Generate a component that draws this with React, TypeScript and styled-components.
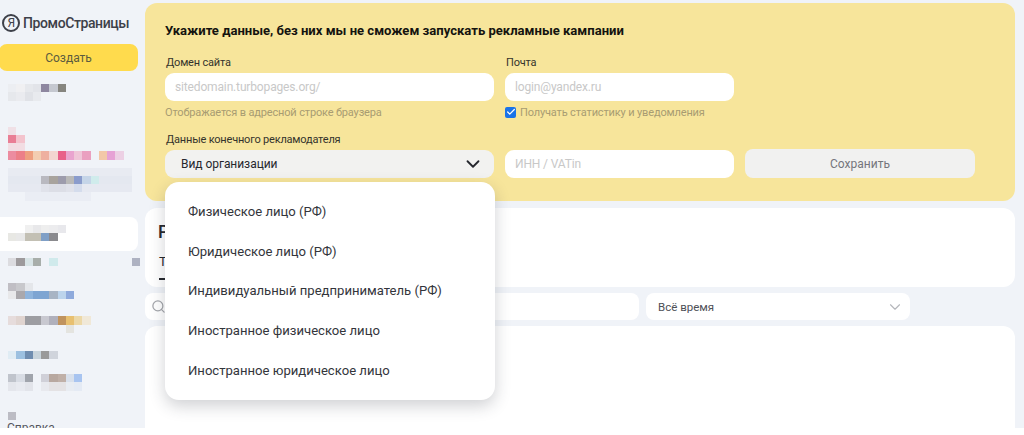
import * as React from 'react';
import styled, { createGlobalStyle } from 'styled-components';
import { Check, ChevronDown, Search } from 'lucide-react';

const GlobalStyle = createGlobalStyle`
  html, body {
    margin: 0;
    background: #fff;
    font-family: Roboto, "Liberation Sans", sans-serif;
    color: #26282d;
  }
`;

const Page = styled.div`
  display: flex;
  height: 428px;
  overflow: hidden;
  background: #f0f3f8;
`;

const Sidebar = styled.aside`
  flex: 0 0 145px;
  display: flex;
  flex-direction: column;
  padding-top: 14px;
  box-sizing: border-box;

  > * {
    flex: none;
  }
`;

const Logo = styled.div`
  display: flex;
  align-items: center;
  gap: 3px;
  height: 18px;
  padding-left: 2px;
  font-size: 14px;
  font-weight: 500;
  letter-spacing: -0.4px;
  color: #3d4049;
  white-space: nowrap;
`;

const LogoMark = styled.span`
  width: 14px;
  height: 14px;
  border: 2px solid #3d4049;
  border-radius: 50%;
  display: flex;
  align-items: center;
  justify-content: center;
  font-size: 12px;
  font-weight: 400;
`;

const CreateButton = styled.div`
  width: 139px;
  height: 27px;
  margin: 12px 0 0 -1px;
  border-radius: 8px;
  background: #ffdb4d;
  display: flex;
  align-items: center;
  justify-content: center;
  font-size: 12px;
  color: #5c5b3f;
`;

const Mosaic = styled.div<{ $gap: number }>`
  display: flex;
  flex-direction: column;
  margin: ${(p) => p.$gap}px 0 0 8px;
  filter: blur(0.5px);
`;

const MosaicRow = styled.div`
  display: flex;
  height: 8.25px;
`;

const Cell = styled.i<{ $color: string }>`
  display: block;
  width: 8.25px;
  background: ${(p) => p.$color};
`;

const ActiveItem = styled.div`
  width: 138px;
  height: 34px;
  margin-top: 16px;
  padding-top: 8px;
  box-sizing: border-box;
  background: #fff;
  border-radius: 0 8px 8px 0;
`;

const HelpLink = styled.div`
  margin: 1px 0 0 7px;
  font-size: 12px;
  color: #54565d;
`;

const Main = styled.main`
  flex: 0 0 870px;
  display: flex;
  flex-direction: column;
  gap: 6px;
  padding-top: 3px;
  position: relative;

  > section,
  > div {
    flex: none;
  }
`;

const Notice = styled.section`
  height: 198px;
  box-sizing: border-box;
  padding: 20px 40px 0 20px;
  border-radius: 12px;
  background: #f7e59b;
  margin-bottom: 1px;
`;

const NoticeTitle = styled.h2`
  margin: 0;
  font-size: 13.07px;
  line-height: 16px;
  font-weight: 700;
  color: #14130f;
`;

const FormGrid = styled.div`
  display: grid;
  grid-template-columns: 329px 229px 230px;
  column-gap: 11px;
  margin-top: 17px;
`;

const FieldLabel = styled.label`
  display: block;
  height: 14px;
  margin: 0 0 3px 1px;
  font-size: 11px;
  line-height: 14px;
  letter-spacing: -0.2px;
  color: #34332c;
`;

const Input = styled.div`
  height: 28px;
  border-radius: 9px;
  background: #fff;
  padding-left: 10px;
  display: flex;
  align-items: center;
  font-size: 12px;
  letter-spacing: -0.15px;
  color: #c8c8c8;
`;

const Hint = styled.div`
  display: flex;
  align-items: center;
  gap: 4px;
  height: 22px;
  font-size: 11px;
  letter-spacing: -0.15px;
  color: #a89c72;
`;

const CheckMark = styled.span`
  width: 11px;
  height: 11px;
  border-radius: 2px;
  background: #1a73e8;
  display: flex;
  align-items: center;
  justify-content: center;
  color: #fff;
`;

const SecondRow = styled(FormGrid)`
  margin-top: 10px;
  align-items: end;
`;

const OrgSelect = styled.div`
  height: 28px;
  border-radius: 9px;
  background: #f2f2f0;
  padding: 0 10px 0 16px;
  display: flex;
  align-items: center;
  justify-content: space-between;
  font-size: 12px;
  letter-spacing: -0.05px;
  color: #26282d;
`;

const SaveButton = styled.div`
  height: 29px;
  border-radius: 8px;
  background: #f1f1f0;
  display: flex;
  align-items: center;
  justify-content: center;
  font-size: 12px;
  color: #75767c;
`;

const Card = styled.section<{ $height: number }>`
  height: ${(p) => p.$height}px;
  box-sizing: border-box;
  border-radius: 12px;
  background: #fff;
  padding: 14px 0 0 13px;
  overflow: hidden;
`;

const CardTitle = styled.div`
  font-size: 18px;
  line-height: 20px;
  font-weight: 500;
  color: #26282d;
`;

const Tab = styled.div`
  display: inline-block;
  margin: 12px 0 0 1px;
  font-size: 13px;
  line-height: 16px;
  padding-bottom: 8px;
  border-bottom: 2px solid #26282d;
`;

const FilterRow = styled.div`
  display: flex;
  gap: 7px;
`;

const SearchBox = styled.div`
  width: 494px;
  height: 27px;
  border-radius: 8px;
  background: #fff;
  display: flex;
  align-items: center;
  padding-left: 6px;
  box-sizing: border-box;
  color: #a4a6ab;
`;

const PeriodSelect = styled.div`
  width: 264px;
  height: 27px;
  border-radius: 8px;
  background: #fff;
  padding: 0 6px 0 12px;
  box-sizing: border-box;
  display: flex;
  align-items: center;
  justify-content: space-between;
  font-size: 11.5px;
  color: #4e5057;
`;

const Dropdown = styled.ul`
  position: absolute;
  left: 20px;
  top: 182px;
  width: 330px;
  height: 218px;
  margin: 0;
  padding: 10px 0 0 23px;
  box-sizing: border-box;
  list-style: none;
  border-radius: 14px;
  background: #fff;
  box-shadow: 0 6px 16px rgba(40, 44, 60, 0.22);
`;

const Option = styled.li`
  height: 39.6px;
  display: flex;
  align-items: center;
  font-size: 13.1px;
  color: #33353b;
`;

const options = [
  'Физическое лицо (РФ)',
  'Юридическое лицо (РФ)',
  'Индивидуальный предприниматель (РФ)',
  'Иностранное физическое лицо',
  'Иностранное юридическое лицо',
];

const BG = 'transparent';

const blurredMenu: { gap: number; rows: string[][] }[] = [
  {
    gap: 13,
    rows: [
      ['#eceef2', '#f0f0f2', '#e6e8ec', '#e2e4e9', '#8e87a0', '#c5c8d0', '#86857f'],
      ['#e6e8ec', '#eaebef', '#e0e2e7', '#e8eaee'],
    ],
  },
  {
    gap: 26,
    rows: [
      ['#f0e0e6'],
      ['#e97e95', '#f3c3cd'],
      ['#f2dde3', '#f2dde3'],
      ['#ec8ca0', '#ec7f88', '#ee9f7f', '#f3cdb0', '#eeb0a0', '#f3d5d0', '#e8608a', '#e9a4cf', '#efc6d8', '#eaa0c0', BG, '#f3c8a8', '#e6a2d5', '#ecd0e4'],
    ],
  },
  {
    gap: 8,
    rows: [
      ['#e8ebf2', '#e8ebf2', '#e8ebf2', '#e8ebf2', '#e8ebf2', '#e8ebf2', '#e8ebf2', '#e8ebf2', '#e8ebf2', '#e8ebf2', '#e8ebf2', '#e8ebf2', '#e8ebf2', '#e8ebf2', '#e8ebf2'],
      ['#e4e8f0', '#e4e8f0', '#e4e8f0', '#e4e8f0', '#b9b9c0', '#a8a39d', '#9d9cac', '#b9b9b8', '#8a9ccc', '#c5d5e8', '#d0ecec', '#e4e8f0', '#e4e8f0', '#e4e8f0', '#e4e8f0'],
      ['#e6e9f1', '#e6e9f1', '#e6e9f1', '#e6e9f1', '#e0e2ea', '#dcdee6', '#dcdee6', '#e0e2ea', '#d4dcec', '#e6e9f1', '#e6e9f1', '#e6e9f1', '#e6e9f1', '#e6e9f1', '#e6e9f1'],
      [BG, BG, '#eaedf4', '#eaedf4', '#eaedf4', '#eaedf4', '#eaedf4', '#eaedf4', '#eaedf4', '#eaedf4'],
    ],
  },
];

const activeRows = [
  [BG, BG, '#f0f0f0', '#e8e8ea', '#eeeeee', '#ececee', '#e8e8ec'],
  ['#e8e8e4', '#e8e8e8', '#c3c0b4', '#c3c0b4', '#7f9fc6', '#8a8a8e'],
];

const lowerMenu: { gap: number; rows: string[][] }[] = [
  {
    gap: 7,
    rows: [['#dcdce0', '#9d9a9c', '#d8e4e6', '#a8aeaa', BG, '#d0eaec', BG, BG, BG, BG, BG, BG, BG, BG, BG, '#aeb2c2']],
  },
  {
    gap: 17,
    rows: [
      ['#c0bec4', '#c8c8cc', '#e4e6ea'],
      ['#e8e8ea', '#aaa8ac', '#8fb4dc', '#7ea5d2', '#7ea5d2', '#a8b4c4', '#bcd4ec', '#8faadc'],
    ],
  },
  {
    gap: 17,
    rows: [
      ['#e6dcdc', '#e0d4d0', '#9d9da2', '#9d9da2', '#c8c8d0', '#b0b0bc', '#c0935e', '#e8c070', '#ecd8a8', '#f0e8d8'],
      [BG, BG, BG, BG, BG, BG, BG, '#e4e4e0'],
    ],
  },
  {
    gap: 18,
    rows: [['#e0ecf4', '#9cc0e0', '#6f8db0', '#c8d4dc', '#9a9a9a', '#d0d4dc']],
  },
  {
    gap: 15,
    rows: [
      ['#c0c4cc', '#d8dce4', '#a0a4ac', BG, '#d0d0d8', '#b8a8a0', '#c0b0a8', '#d8e0ec', '#a8c4f0'],
      ['#e4e6ec', '#e8eaf0', '#e2e4ea', BG, '#e8e9ee', '#e4e2e4', '#e4e2e4', '#e8ecf2', '#e4eaf4'],
    ],
  },
  {
    gap: 21,
    rows: [['#bcbcc4']],
  },
];

function Blurred({ gap, rows }: { gap: number; rows: string[][] }) {
  return (
    <Mosaic $gap={gap}>
      {rows.map((row, r) => (
        <MosaicRow key={r}>
          {row.map((color, c) => (
            <Cell key={c} $color={color} />
          ))}
        </MosaicRow>
      ))}
    </Mosaic>
  );
}

export default function App() {
  return (
    <Page>
      <GlobalStyle />
      <Sidebar>
        <Logo>
          <LogoMark>Я</LogoMark>
          ПромоСтраницы
        </Logo>
        <CreateButton>Создать</CreateButton>
        {blurredMenu.map((item, i) => (
          <Blurred key={i} gap={item.gap} rows={item.rows} />
        ))}
        <ActiveItem>
          <Blurred gap={0} rows={activeRows} />
        </ActiveItem>
        {lowerMenu.map((item, i) => (
          <Blurred key={i} gap={item.gap} rows={item.rows} />
        ))}
        <HelpLink>Справка</HelpLink>
      </Sidebar>
      <Main>
        <Notice>
          <NoticeTitle>
            Укажите данные, без них мы не сможем запускать рекламные кампании
          </NoticeTitle>
          <FormGrid>
            <div>
              <FieldLabel>Домен сайта</FieldLabel>
              <Input>sitedomain.turbopages.org/</Input>
              <Hint>Отображается в адресной строке браузера</Hint>
            </div>
            <div>
              <FieldLabel>Почта</FieldLabel>
              <Input>login@yandex.ru</Input>
              <Hint>
                <CheckMark>
                  <Check size={10} strokeWidth={3} />
                </CheckMark>
                Получать статистику и уведомления
              </Hint>
            </div>
          </FormGrid>
          <SecondRow>
            <div>
              <FieldLabel>Данные конечного рекламодателя</FieldLabel>
              <OrgSelect>
                Вид организации
                <ChevronDown size={22} strokeWidth={2} color="#26282d" />
              </OrgSelect>
            </div>
            <Input>ИНН / VATin</Input>
            <SaveButton>Сохранить</SaveButton>
          </SecondRow>
        </Notice>
        <Card $height={79}>
          <CardTitle>Р</CardTitle>
          <Tab>Т</Tab>
        </Card>
        <FilterRow>
          <SearchBox>
            <Search size={15} strokeWidth={2} />
          </SearchBox>
          <PeriodSelect>
            Всё время
            <ChevronDown size={18} strokeWidth={1.5} color="#b4b6bb" />
          </PeriodSelect>
        </FilterRow>
        <Card $height={120} />
        <Dropdown>
          {options.map((label) => (
            <Option key={label}>{label}</Option>
          ))}
        </Dropdown>
      </Main>
    </Page>
  );
}
